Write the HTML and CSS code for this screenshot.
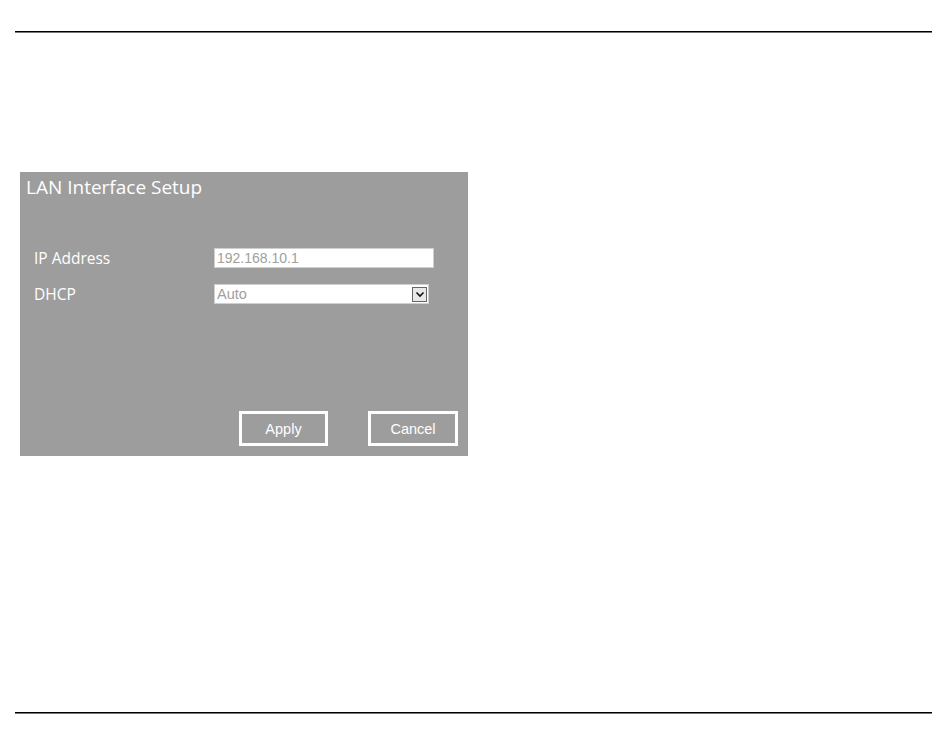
FILE: index.html
```html
<!DOCTYPE html>
<html lang="en">
<head>
    <meta charset="UTF-8">
    <title>LAN Interface Setup</title>
    <link rel="stylesheet" href="styles.css">
</head>
<body>
    <div class="rule rule-top"></div>
    <div class="panel">
        <h1 class="panel-title">LAN Interface Setup</h1>
        <div class="form">
            <div class="row">
                <label class="label" for="ip">IP Address</label>
                <input class="field" id="ip" type="text" value="192.168.10.1">
            </div>
            <div class="row">
                <label class="label" for="dhcp">DHCP</label>
                <div class="select">
                    <span class="select-value">Auto</span>
                    <span class="select-arrow">
                        <svg width="10" height="7" viewBox="0 0 10 7"><path d="M1.5 1.5 L5 5 L8.5 1.5" fill="none" stroke="#111" stroke-width="1.6"/></svg>
                    </span>
                </div>
            </div>
        </div>
        <div class="actions">
            <button class="btn btn-apply">Apply</button>
            <button class="btn">Cancel</button>
        </div>
    </div>
    <div class="rule rule-bottom"></div>
</body>
</html>
```

FILE: styles.css
```css
body {
    margin: 0;
    padding: 0;
    background-color: #fff;
    font-family: 'Liberation Sans', Arial, sans-serif;
}
.rule {
    margin-left: 15px;
    width: 917px;
    height: 1px;
    background-color: #000;
    border-bottom: 1px solid #777;
}
.rule-top {
    margin-top: 31px;
}
.rule-bottom {
    margin-top: 256px;
}
.panel {
    margin: 139px 0 0 20px;
    width: 448px;
    height: 284px;
    background-color: #9e9d9d;
    box-sizing: border-box;
    display: flex;
    flex-direction: column;
}
.panel-title {
    margin: 0;
    padding: 2px 0 0 6px;
    font-family: 'Open Sans', sans-serif;
    font-weight: normal;
    font-size: 19px;
    line-height: 26px;
    color: #fff;
}
.form {
    margin-top: 48px;
    padding-left: 14px;
}
.row {
    display: flex;
    align-items: center;
    height: 20px;
    margin-bottom: 16px;
}
.label {
    width: 180px;
    font-family: 'Open Sans', sans-serif;
    font-size: 15.5px;
    color: #fff;
}
.field {
    width: 220px;
    height: 20px;
    box-sizing: border-box;
    margin: 0;
    padding: 0 2px;
    border: 1px solid #cfcfcf;
    background-color: #fff;
    font-family: 'Liberation Sans', Arial, sans-serif;
    font-size: 14px;
    color: #a0a0a0;
    outline: none;
}
.select {
    width: 215px;
    height: 20px;
    box-sizing: border-box;
    border: 1px solid #cfcfcf;
    background-color: #fff;
    display: flex;
    align-items: center;
    justify-content: space-between;
    padding: 0 1px 0 2px;
}
.select-value {
    font-size: 14.5px;
    color: #a0a0a0;
}
.select-arrow {
    width: 15px;
    height: 15px;
    box-sizing: border-box;
    border: 1px solid #666;
    background-color: #e8e8e8;
    display: flex;
    align-items: center;
    justify-content: center;
}
.actions {
    margin-top: auto;
    display: flex;
    justify-content: flex-end;
    gap: 40px;
    padding: 0 10px 10px 0;
}
.btn {
    width: 90px;
    height: 35px;
    box-sizing: border-box;
    border: 3px solid #fff;
    background-color: #9e9d9d;
    color: #fff;
    font-family: 'Liberation Sans', Arial, sans-serif;
    font-size: 14.5px;
    padding: 0;
    cursor: pointer;
}
.btn-apply {
    width: 89px;
}
```
